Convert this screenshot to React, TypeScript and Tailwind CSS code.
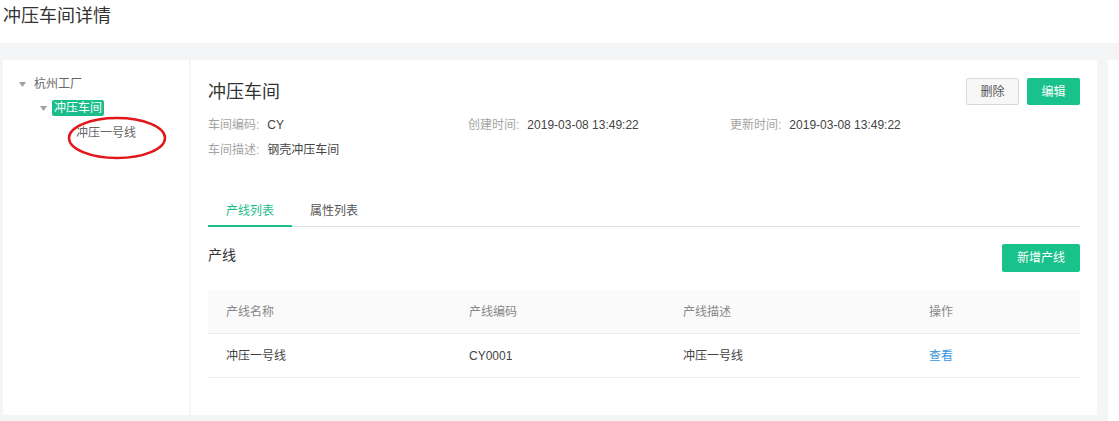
const font = { fontFamily: '"Liberation Sans", "Noto Sans CJK SC", sans-serif' };

function Caret() {
  return (
    <svg width="7" height="5" viewBox="0 0 7 5" className="shrink-0" aria-hidden>
      <path d="M0 0h7L3.5 5z" fill="#a0a0a0" />
    </svg>
  );
}

function InfoItem({ label, value }: { label: string; value: string }) {
  return (
    <div className="flex text-[12px] leading-[25px]">
      <span className="text-[#a3a3a3]">{label}:</span>
      <span className="ml-[8px] text-[#444]">{value}</span>
    </div>
  );
}

const columns = [
  { title: "产线名称", width: "w-[243px]" },
  { title: "产线编码", width: "w-[214px]" },
  { title: "产线描述", width: "w-[246px]" },
  { title: "操作", width: "flex-1" },
];

export default function App() {
  return (
    <div className="h-[421px] w-[1119px] overflow-hidden bg-white" style={font}>
      <div className="h-[43px] bg-white pl-[3px] pt-[4px] text-[18px] leading-[24px] text-[#333]">
        冲压车间详情
      </div>

      <div className="flex h-[378px] bg-[#f4f5f7] pl-[3px] pt-[17px]">
        <div className="flex h-[355px] w-[1094px]">
          {/* tree */}
          <aside className="w-[186px] bg-white pt-[16px] text-[12px] text-[#666]">
            <div className="flex h-[16px] items-center pl-[16px]">
              <Caret />
              <span className="ml-[8px]">杭州工厂</span>
            </div>
            <div className="mt-[8px] flex h-[16px] items-center pl-[37px]">
              <Caret />
              <span className="ml-[5px] rounded-[2px] bg-[#1bbd8a] px-[2px] leading-[16px] text-white">
                冲压车间
              </span>
            </div>
            <div className="relative mt-[9px] h-[16px] pl-[73px] leading-[16px]">
              冲压一号线
              <svg
                width="100"
                height="44"
                viewBox="0 0 100 44"
                className="absolute left-[64px] top-[-9px]"
                aria-hidden
              >
                <ellipse cx="50" cy="22" rx="48" ry="20" fill="none" stroke="#e3171b" strokeWidth="2.5" />
              </svg>
            </div>
          </aside>

          <div className="w-[2px] bg-[#f4f5f7]" />

          {/* detail */}
          <section className="flex-1 bg-white px-[17px] pt-[18px]">
            <div className="flex items-start justify-between">
              <h1 className="text-[18px] leading-[28px] text-[#333]">冲压车间</h1>
              <div className="flex gap-[8px]">
                <button className="h-[27px] w-[53px] rounded-[2px] border border-[#d9d9d9] bg-[#f7f7f7] text-[12px] text-[#555]">
                  删除
                </button>
                <button className="h-[27px] w-[53px] rounded-[2px] bg-[#19c18b] text-[12px] text-white">
                  编辑
                </button>
              </div>
            </div>

            <div className="mt-[7px] grid grid-cols-[260px_262px_1fr]">
              <InfoItem label="车间编码" value="CY" />
              <InfoItem label="创建时间" value="2019-03-08 13:49:22" />
              <InfoItem label="更新时间" value="2019-03-08 13:49:22" />
              <InfoItem label="车间描述" value="钢壳冲压车间" />
            </div>

            <div className="mt-[37px] flex border-b border-[#dcdfe3] text-[12px]">
              <div className="-mb-px border-b-2 border-[#1bbd8a] px-[18px] pb-[3px] leading-[22px] text-[#1bbd8a]">
                产线列表
              </div>
              <div className="px-[18px] pb-[3px] leading-[22px] text-[#555]">属性列表</div>
            </div>

            <div className="mt-[17px] flex items-start justify-between">
              <span className="text-[14px] leading-[22px] text-[#333]">产线</span>
              <button className="h-[28px] w-[78px] rounded-[2px] bg-[#19c18b] text-[12px] text-white">
                新增产线
              </button>
            </div>

            <div className="mt-[18px] text-[12px]">
              <div className="flex h-[44px] items-center border-b border-[#ebebeb] bg-[#fafafa] text-[#888]">
                {columns.map((c) => (
                  <div key={c.title} className={`${c.width} pl-[18px]`}>
                    {c.title}
                  </div>
                ))}
              </div>
              <div className="flex h-[44px] items-center border-b border-[#ededed] text-[#444]">
                <div className="w-[243px] pl-[18px]">冲压一号线</div>
                <div className="w-[214px] pl-[18px]">CY0001</div>
                <div className="w-[246px] pl-[18px]">冲压一号线</div>
                <div className="flex-1 pl-[18px] text-[#3a95e0]">查看</div>
              </div>
            </div>
          </section>
        </div>
        <div className="ml-[11px] h-full flex-1 bg-white" />
      </div>
    </div>
  );
}
